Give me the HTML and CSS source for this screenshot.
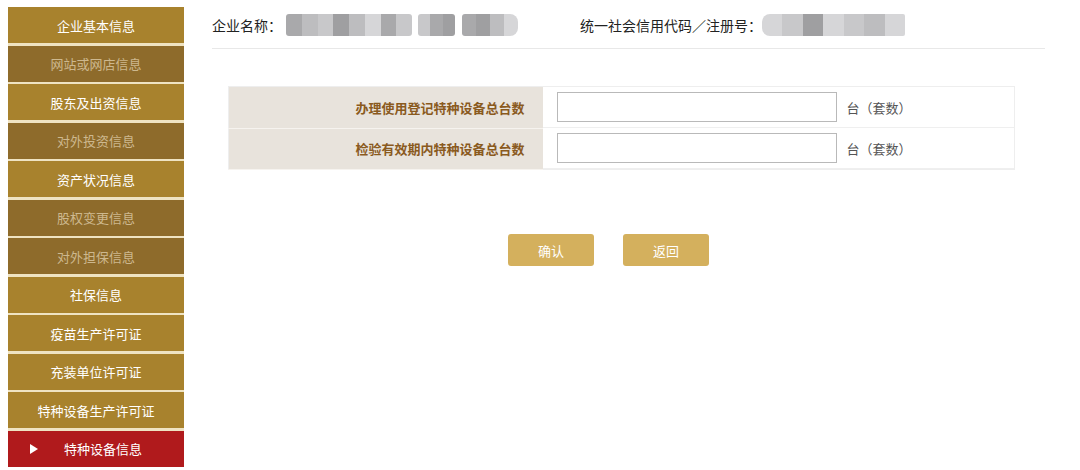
FILE: index.html
```html
<!DOCTYPE html>
<html lang="zh-CN">
<head>
<meta charset="utf-8">
<title>特种设备信息</title>
<link rel="stylesheet" href="styles.css">
</head>
<body>
<div class="page">
  <nav class="sidebar">
    <a class="item">企业基本信息</a>
    <a class="item dim">网站或网店信息</a>
    <a class="item">股东及出资信息</a>
    <a class="item dim">对外投资信息</a>
    <a class="item">资产状况信息</a>
    <a class="item dim">股权变更信息</a>
    <a class="item dim">对外担保信息</a>
    <a class="item">社保信息</a>
    <a class="item">疫苗生产许可证</a>
    <a class="item">充装单位许可证</a>
    <a class="item">特种设备生产许可证</a>
    <a class="item active"><span class="arrow"></span>特种设备信息</a>
  </nav>
  <main class="main">
    <header class="head">
      <div class="field name">
        <span class="lbl">企业名称：</span>
        <span class="blur b1">
          <i class="c1"></i><i class="c2"></i><i class="c3"></i><i class="c4"></i><i class="c2"></i><i class="c5"></i><i class="c1"></i><i class="c3"></i>
        </span>
        <span class="blur b2"><i class="c3"></i><i class="c1"></i><i class="c4"></i></span>
        <span class="blur b3"><i class="c1"></i><i class="c4"></i><i class="c2"></i><i class="c5"></i></span>
      </div>
      <div class="field code">
        <span class="lbl">统一社会信用代码／注册号：</span>
        <span class="blur b4"><i class="c5"></i><i class="c3"></i><i class="c4"></i><i class="c5"></i><i class="c3"></i><i class="c2"></i><i class="c5"></i></span>
      </div>
    </header>
    <table class="form">
      <tr>
        <th>办理使用登记特种设备总台数</th>
        <td><input type="text" class="inp"><span class="unit">台（套数）</span></td>
      </tr>
      <tr>
        <th>检验有效期内特种设备总台数</th>
        <td><input type="text" class="inp"><span class="unit">台（套数）</span></td>
      </tr>
    </table>
    <div class="actions">
      <button class="btn">确认</button>
      <button class="btn">返回</button>
    </div>
  </main>
</div>
</body>
</html>
```

FILE: styles.css
```css
* { box-sizing: border-box; }
html, body { margin: 0; padding: 0; background: #fff; }
body {
  font-family: "Noto Sans CJK SC", "Noto Sans", "Liberation Sans", sans-serif;
  color: #333;
  width: 1080px;
  height: 470px;
  overflow: hidden;
}
.page {
  display: flex;
  align-items: flex-start;
}
.sidebar {
  margin: 7px 0 0 8px;
  width: 176px;
  display: flex;
  flex-direction: column;
  gap: 2.5px;
  background: #efe3c2;
}
.item {
  display: flex;
  align-items: center;
  justify-content: center;
  height: 36px;
  background: #a8822d;
  color: #fff;
  font-size: 13px;
  position: relative;
  text-decoration: none;
}
.item.dim {
  background: #8e6b2b;
  color: #cdb88e;
}
.item.active {
  background: #b01a1c;
  color: #fff;
  padding-left: 14px;
}
.arrow {
  position: absolute;
  left: 22px;
  top: 13px;
  width: 0;
  height: 0;
  border-left: 8px solid #fff;
  border-top: 5px solid transparent;
  border-bottom: 5px solid transparent;
}
.main {
  margin-left: 28px;
  width: 833px;
}
.head {
  display: flex;
  align-items: center;
  height: 49px;
  padding-top: 2px;
  border-bottom: 1px solid #e8e8e8;
}
.field {
  display: flex;
  align-items: center;
  font-size: 14px;
  color: #222;
}
.lbl { white-space: nowrap; }
.name .lbl { width: 74px; }
.code { margin-left: 62px; }
.blur {
  display: flex;
  height: 22px;
  border-radius: 3px;
  overflow: hidden;
}
.blur i { flex: 1; display: block; }
.b1 { width: 126px; }
.b2 { width: 37px; margin-left: 6px; }
.b3 { width: 56px; margin-left: 7px; border-radius: 3px 8px 8px 3px; }
.b4 { width: 143px; margin-left: 0; border-radius: 8px 2px 2px 8px; }
.c1 { background: #a9a9ab; }
.c2 { background: #bdbdbf; }
.c3 { background: #c8c8ca; }
.c4 { background: #9f9fa1; }
.c5 { background: #d6d6d8; }
.form {
  margin: 37px 0 0 16px;
  width: 787px;
  border-collapse: collapse;
  border: 1px solid #eeeeee;
}
.form tr { height: 41px; }
.form th {
  width: 314px;
  background: #e8e3dc;
  color: #8a5a1e;
  font-size: 13px;
  font-weight: bold;
  text-align: right;
  padding: 0 18px 0 0;
  border-bottom: 1px solid #f6f3ef;
}
.form td {
  display: flex;
  align-items: center;
  height: 41px;
  padding: 0 0 0 14px;
  border-bottom: 1px solid #efefef;
}
.inp {
  width: 280px;
  height: 30px;
  border: 1px solid #b9b9b9;
  background: #fff;
  margin: 0;
  padding: 0 4px;
}
.unit {
  margin-left: 10px;
  font-size: 13px;
  color: #555;
}
.actions {
  display: flex;
  gap: 29px;
  padding-left: 296px;
  margin-top: 64px;
}
.btn {
  width: 86px;
  height: 32px;
  border: none;
  border-radius: 3px;
  background: #d4b05d;
  color: #fff;
  font-family: inherit;
  font-size: 13px;
  padding: 0;
}
```
